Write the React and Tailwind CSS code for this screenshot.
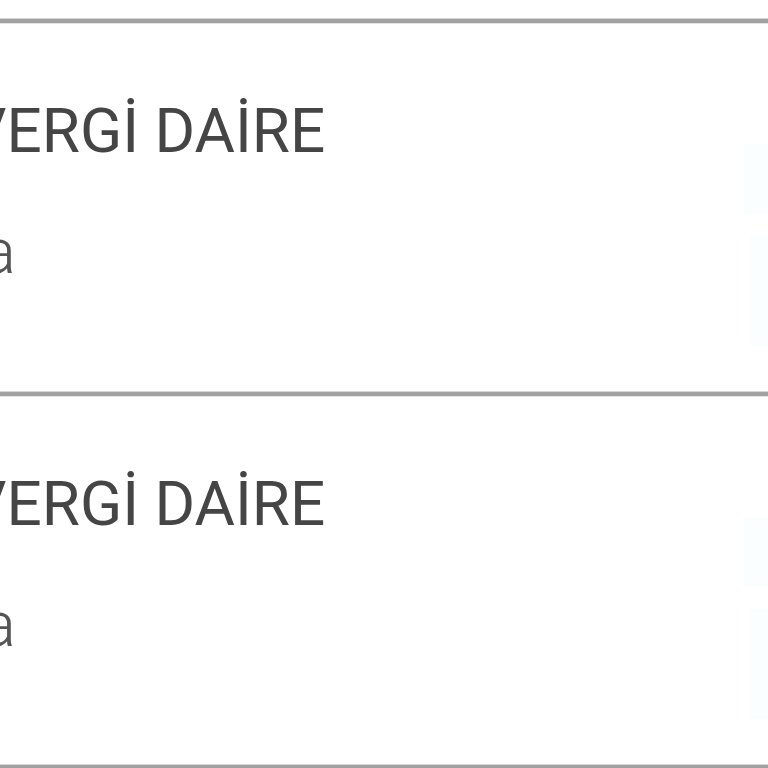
import React from 'react'

const rows = [
  { title: 'VERGİ DAİRE', sub: 'a' },
  { title: 'VERGİ DAİRE', sub: 'a' },
]

function Divider() {
  return (
    <div className="flex flex-col">
      <div className="h-px bg-[#d6d6d6]" />
      <div className="h-[4px] bg-[#a1a1a1]" />
      <div className="h-px bg-[#e4e4e4]" />
    </div>
  )
}

function Row({ title, sub }) {
  return (
    <div className="relative flex h-[367px] overflow-hidden bg-white">
      <div className="flex flex-1 flex-col pt-[76px]">
        <div className="-ml-[33px] whitespace-nowrap text-[62px] leading-[62px] text-[#454545]">{title}</div>
        <div className="-ml-[18px] mt-[59px] whitespace-nowrap text-[63px] leading-[62px] font-light text-[#555555]">{sub}</div>
      </div>
      <div className="flex w-[32px] flex-col gap-[22px] pt-[120px]">
        <div className="ml-[8px] h-[70px] w-[24px] bg-[#fbfeff]" />
        <div className="ml-[14px] h-[110px] w-[18px] bg-[#fbfeff]" />
      </div>
    </div>
  )
}

export default function App() {
  return (
    <div className="h-[768px] w-[768px] overflow-hidden bg-white" style={{ fontFamily: 'Roboto, "Noto Sans", sans-serif' }}>
      <div className="h-[18px] bg-white" />
      <Divider />
      {rows.map((r, i) => (
        <React.Fragment key={i}>
          <Row {...r} />
          <Divider />
        </React.Fragment>
      ))}
    </div>
  )
}
